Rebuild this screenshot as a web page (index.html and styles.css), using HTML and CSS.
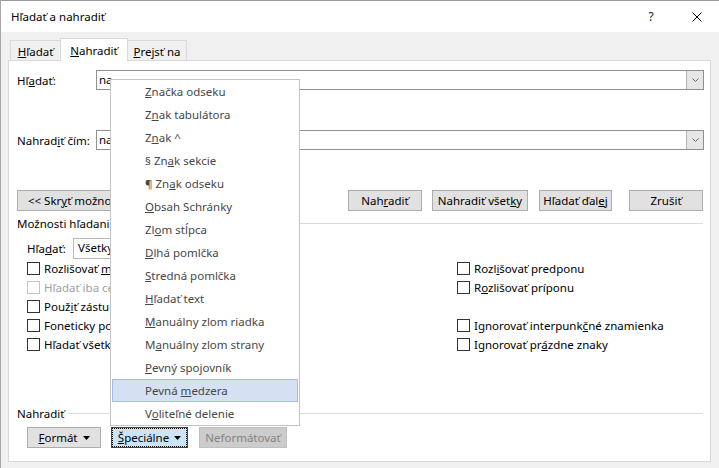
FILE: index.html
```html
<!DOCTYPE html>
<html lang="sk">
<head>
<meta charset="utf-8">
<title>Hľadať a nahradiť</title>
<link rel="stylesheet" href="styles.css">
</head>
<body>
<div class="window">
  <header class="titlebar">
    <span class="title">Hľadať a nahradiť</span>
    <span class="help">?</span>
    <svg class="close" width="10" height="10" viewBox="0 0 10 10"><path d="M0.5 0.5 L9.5 9.5 M9.5 0.5 L0.5 9.5" stroke="#000" stroke-width="1" fill="none"/></svg>
  </header>
  <div class="body">
    <div class="tabs">
      <div class="tab t1"><span><u>H</u>ľadať</span></div>
      <div class="tab active"><span><u>N</u>ahradiť</span></div>
      <div class="tab t3"><span><u>P</u>rejsť na</span></div>
    </div>
    <div class="panel">
      <div class="field-row">
        <label class="field-label">Hľ<u>a</u>dať:</label>
        <div class="combo"><span class="combo-value">na</span><span class="combo-btn"><svg width="7" height="4" viewBox="0 0 7 4"><path d="M0.5 0.5 L3.5 3.5 L6.5 0.5" stroke="#666" fill="none"/></svg></span></div>
      </div>
      <div class="field-row second">
        <label class="field-label">Nahrad<u>i</u>ť čím:</label>
        <div class="combo"><span class="combo-value">na</span><span class="combo-btn"><svg width="7" height="4" viewBox="0 0 7 4"><path d="M0.5 0.5 L3.5 3.5 L6.5 0.5" stroke="#666" fill="none"/></svg></span></div>
      </div>
      <div class="button-row">
        <button class="btn less"><span>&lt;&lt; Skr<u>y</u>ť možnosti</span></button>
        <button class="btn b-replace"><span>Nah<u>r</u>adiť</span></button>
        <button class="btn b-all"><span>Nahradiť všet<u>k</u>y</span></button>
        <button class="btn b-next"><span>Hľadať ďal<u>e</u>j</span></button>
        <button class="btn b-cancel"><span>Zrušiť</span></button>
      </div>
      <div class="group-title"><span>Možnosti hľadania</span><span class="rule"></span></div>
      <div class="search-row">
        <label class="search-label">Hľa<u>d</u>ať:</label>
        <div class="select">Všetky</div>
      </div>
      <div class="options">
        <label class="check"><span class="box"></span><span>Rozlišovať <u>m</u>alé a veľké písmená</span></label>
        <label class="check"><span class="box"></span><span>Rozl<u>i</u>šovať predponu</span></label>
        <label class="check disabled"><span class="box"></span><span>Hľadať iba celé slová</span></label>
        <label class="check"><span class="box"></span><span>R<u>o</u>zlišovať príponu</span></label>
        <label class="check"><span class="box"></span><span>Použ<u>i</u>ť zástupné znaky</span></label>
        <span class="empty"></span>
        <label class="check"><span class="box"></span><span>Foneticky podobné (angličtina)</span></label>
        <label class="check"><span class="box"></span><span>Ignorovať interpunk<u>č</u>né znamienka</span></label>
        <label class="check"><span class="box"></span><span>Hľadať všetky tvary slova (angličtina)</span></label>
        <label class="check"><span class="box"></span><span>Ignorovať pr<u>á</u>zdne znaky</span></label>
      </div>
      <div class="group-title replace-title"><span>Nahradiť</span><span class="rule"></span></div>
      <div class="bottom-row">
        <button class="btn b-format"><span><u>F</u>ormát</span><svg class="caret" width="7" height="4" viewBox="0 0 7 4"><path d="M0 0 H7 L3.5 4 Z" fill="#000"/></svg></button>
        <button class="btn b-special focused"><span><u>Š</u>peciálne</span><svg class="caret" width="7" height="4" viewBox="0 0 7 4"><path d="M0 0 H7 L3.5 4 Z" fill="#000"/></svg></button>
        <button class="btn b-noformat" disabled><span>Neformátovať</span></button>
      </div>
    </div>
  </div>
  <ul class="menu">
    <li><u>Z</u>načka odseku</li>
    <li>Z<u>n</u>ak tabulátora</li>
    <li>Z<u>n</u>ak ^</li>
    <li>§ Zn<u>a</u>k sekcie</li>
    <li>¶ Zn<u>a</u>k odseku</li>
    <li><u>O</u>bsah Schránky</li>
    <li>Zl<u>o</u>m stĺpca</li>
    <li><u>D</u>lhá pomlčka</li>
    <li><u>S</u>tredná pomlčka</li>
    <li><u>H</u>ľadať text</li>
    <li><u>M</u>anuálny zlom riadka</li>
    <li>M<u>a</u>nuálny zlom strany</li>
    <li><u>P</u>evný spojovník</li>
    <li class="hover">Pevná <u>m</u>edzera</li>
    <li>V<u>o</u>liteľné delenie</li>
  </ul>
</div>
</body>
</html>
```
FILE: styles.css
```css
* { box-sizing: border-box; }
html, body { margin: 0; padding: 0; }
body {
  font-family: "Noto Sans", "Segoe UI", sans-serif;
  font-size: 11.5px;
  color: #000;
  background: #f0f0f0;
}
u { text-decoration: underline; text-underline-offset: 1px; }

.window {
  position: relative;
  width: 719px;
  height: 468px;
  background: #f0f0f0;
  border-top: 1px solid #9a9a9a;
  border-left: 1px solid #a8a8a8;
  overflow: hidden;
}

.titlebar {
  height: 31px;
  background: #fff;
  display: flex;
  align-items: center;
  padding-left: 10px;
  font-size: 12px;
}
.title { flex: 1; font-size: 11.5px; }
.help {
  width: 14px;
  text-align: center;
  font-size: 12px;
  margin-right: 34px;
  color: #222;
}
.close { margin-right: 17px; }

.body { padding: 6px 0 0 7px; }

.tabs {
  display: flex;
  align-items: flex-end;
  height: 22px;
  padding-left: 2px;
}
.tab {
  height: 20px;
  border: 1px solid #d9d9d9;
  border-bottom: none;
  background: #f0f0f0;
  display: flex;
  align-items: center;
  justify-content: center;
  padding-top: 1px;
}
.t1 { width: 51px; }
.t3 { width: 60px; margin-left: -1px; }
.tab.active {
  position: relative;
  z-index: 1;
  width: 68px;
  height: 23px;
  margin-left: -1px;
  margin-bottom: -1px;
  background: #fff;
  padding-top: 0;
}

.panel {
  width: 703px;
  height: 402px;
  background: #fff;
  border: 1px solid #d9d9d9;
  padding: 9px 6px 0 8px;
}

.field-row {
  display: flex;
  align-items: center;
  height: 20px;
}
.field-row.second { margin-top: 40px; }
.field-label { width: 79px; }
.combo {
  flex: 1;
  height: 20px;
  border: 1px solid #8f8f8f;
  display: flex;
}
.combo-value {
  flex: 1;
  padding-left: 2px;
  line-height: 17px;
}
.combo-btn {
  width: 17px;
  background: #e6e6e6;
  border-left: 1px solid #b4b4b4;
  display: flex;
  align-items: center;
  justify-content: center;
}

.btn {
  height: 21px;
  border: 1px solid #adadad;
  background: #e1e1e1;
  font: inherit;
  color: #000;
  padding: 0;
  display: flex;
  align-items: center;
  justify-content: center;
  white-space: nowrap;
}
.caret { margin-left: 5px; }
.button-row {
  display: flex;
  margin-top: 40px;
  height: 21px;
}
.less { width: 118px; }
.b-replace { width: 74px; margin-left: auto; }
.b-all { width: 96px; margin-left: 10px; }
.b-next { width: 73px; margin-left: 11px; }
.b-cancel { width: 74px; margin-left: 17px; margin-right: 1px; }

.group-title {
  display: flex;
  align-items: center;
  height: 16px;
  margin-top: 4px;
  margin-right: 1px;
  gap: 4px;
}
.rule { flex: 1; height: 1px; background: #dcdcdc; }
.replace-title { margin-top: 51px; }

.search-row {
  display: flex;
  align-items: center;
  height: 22px;
  margin-top: 6px;
  padding-left: 10px;
}
.search-label { width: 46px; }
.select {
  width: 120px;
  height: 21px;
  border: 1px solid #b9b9b9;
  background: #fff;
  padding: 0 4px;
  line-height: 18px;
}

.options {
  display: grid;
  grid-template-columns: 430px 1fr;
  grid-auto-rows: 19px;
  padding-left: 10px;
}
.check {
  display: flex;
  align-items: center;
  gap: 4px;
  white-space: nowrap;
}
.box {
  width: 13px;
  height: 13px;
  border: 1px solid #333;
  background: #fff;
  flex: none;
}
.check.disabled { color: #a0a0a0; }
.check.disabled .box { border-color: #c4c4c4; }

.bottom-row {
  display: flex;
  margin-top: 6px;
  padding-left: 10px;
  gap: 10px;
}
.b-format { width: 74px; }
.b-special { width: 77px; }
.b-noformat {
  width: 88px;
  margin-left: 1px;
  background: #cccccc;
  border-color: #bfbfbf;
  color: #838383;
}
.focused {
  background: #cce4f7;
  border-color: #005499;
  outline: 1px dotted #000;
  outline-offset: -2px;
}

.menu {
  position: absolute;
  left: 109px;
  top: 78px;
  width: 190px;
  margin: 0;
  padding: 0;
  list-style: none;
  background: #fff;
  border: 1px solid #c3c3c3;
  z-index: 5;
}
.menu li {
  height: 23px;
  margin: 0 1px;
  border: 1px solid transparent;
  padding-left: 32px;
  line-height: 21px;
  color: #474747;
}
.menu li.hover {
  background: #d5e1f2;
  border-color: #a3bde3;
}
```
